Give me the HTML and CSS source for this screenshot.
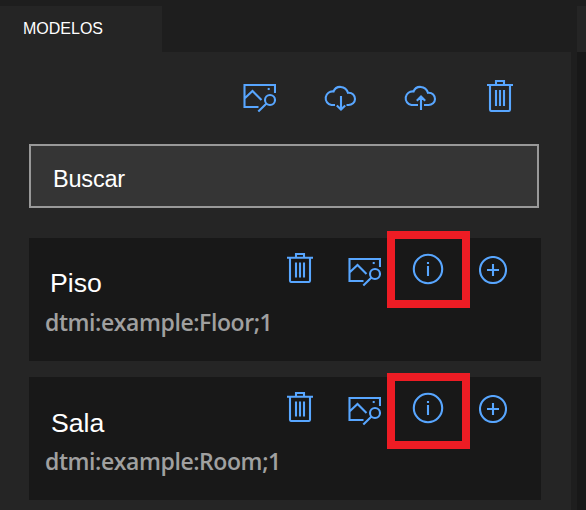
FILE: index.html
```html
<!DOCTYPE html>
<html lang="es">
<head>
<meta charset="utf-8">
<title>Modelos</title>
<link rel="stylesheet" href="styles.css">
</head>
<body>
<svg class="defs" width="0" height="0" aria-hidden="true">
  <symbol id="trash" viewBox="0 0 26 32" preserveAspectRatio="none">
    <path d="M0 5H26M9 5V1H17V5M3 5V29.500Q3 31 4.500 31H21.500Q23 31 23 29.500V5M9 10V26M13 10V26M17 10V26"/>
  </symbol>
  <symbol id="picture" viewBox="0 0 33 30">
    <path d="M15.500 23H1.500V1H32V9M1.500 14.500L9.500 7L18.500 16M23.500 19.500L15.300 27.500"/>
    <circle cx="27" cy="16" r="5"/>
    <path d="M24.700 5H26.700"/>
  </symbol>
  <symbol id="cloud-down" viewBox="0 0 34 26">
    <path d="M12 20H8.500A6.800 6.800 0 1 1 10.500 6.500C13 .2 22.500 .2 25 7.800C29.500 7.500 32 10.500 32 14C32 17.500 29 20 25.500 20H23.500M18 11V25M13.800 20.500L18 24.500L22.200 20.500"/>
  </symbol>
  <symbol id="cloud-up" viewBox="0 0 34 26">
    <path d="M15 20H8.500A6.800 6.800 0 1 1 10.500 6.500C13 .2 22.500 .2 25 7.800C29.500 7.500 32 10.500 32 14C32 17.500 29 20 25.500 20H21M18 25V11.500M13.800 15.700L18 11.500L22.200 15.700"/>
  </symbol>
  <symbol id="info" viewBox="0 0 32 32">
    <circle cx="16" cy="16" r="14.200"/><path d="M16 9V11M16 13V23"/>
  </symbol>
  <symbol id="plus" viewBox="0 0 28 28">
    <circle cx="14" cy="14" r="13"/><path d="M8 14H20M14 8V20"/>
  </symbol>
</svg>
<div class="app">
  <section class="models">
    <header class="tabs"><div class="tab">MODELOS</div></header>
    <main class="panel">
      <nav class="toolbar">
        <svg class="icon picture"><use href="#picture"/></svg>
        <svg class="icon cloud"><use href="#cloud-down"/></svg>
        <svg class="icon cloud cloud-up"><use href="#cloud-up"/></svg>
        <svg class="icon trash"><use href="#trash"/></svg>
      </nav>
      <div class="search">Buscar</div>
      <article class="card">
        <div class="details">
          <div class="name">Piso</div>
          <div class="model-id">dtmi:example:Floor;1</div>
        </div>
        <div class="actions">
          <svg class="icon trash"><use href="#trash"/></svg>
          <svg class="icon picture"><use href="#picture"/></svg>
          <svg class="icon info"><use href="#info"/></svg>
          <svg class="icon plus"><use href="#plus"/></svg>
        </div>
        <div class="highlight"></div>
      </article>
      <article class="card">
        <div class="details">
          <div class="name second">Sala</div>
          <div class="model-id">dtmi:example:Room;1</div>
        </div>
        <div class="actions">
          <svg class="icon trash"><use href="#trash"/></svg>
          <svg class="icon picture"><use href="#picture"/></svg>
          <svg class="icon info"><use href="#info"/></svg>
          <svg class="icon plus"><use href="#plus"/></svg>
        </div>
        <div class="highlight lower"></div>
      </article>
    </main>
  </section>
  <aside class="neighbor"><div class="neighbor-tab"></div></aside>
</div>
</body>
</html>
```

FILE: styles.css
```css
* { box-sizing: border-box; }
body {
  margin: 0;
  background: #1e1e1e;
  color: #fff;
  font-family: "Liberation Sans", Arial, sans-serif;
}
.defs { position: absolute; }
.app {
  display: flex;
  gap: 6px;
  width: 586px;
  height: 510px;
  padding-top: 6px;
  overflow: hidden;
}
.models { width: 571px; display: flex; flex-direction: column; }
.tabs { height: 46px; }
.tab {
  width: 162px;
  height: 46px;
  padding: 14px 0 0 23px;
  background: #252525;
  font-size: 16px;
  line-height: 18px;
}
.panel { flex: 1; padding: 28px 30px 0 29px; background: #252525; }
.neighbor { flex: 1; background: #181818; }
.neighbor-tab { height: 46px; background: #252525; }

.icon {
  display: block;
  flex: none;
  fill: none;
  stroke: #58a6ff;
  stroke-width: 2.1;
  overflow: visible;
}
.trash { width: 26px; height: 32px; }
.picture { width: 33px; height: 30px; }
.cloud { width: 34px; height: 26px; }
.info { width: 32px; height: 32px; }
.plus { width: 28px; height: 28px; }

.toolbar { display: flex; height: 64px; padding-left: 214px; }
.toolbar .picture { margin: 4px 47px 0 0; }
.toolbar .cloud { margin: 5px 46px 0 0; }
.toolbar .cloud-up { margin-right: 50px; }

.search {
  width: 510px;
  height: 64px;
  margin-bottom: 30px;
  padding: 19px 22px;
  border: 2px solid #999;
  background: #353535;
  font-size: 23.5px;
  line-height: 28px;
  letter-spacing: -0.2px;
}
.card {
  position: relative;
  display: flex;
  height: 123px;
  margin-bottom: 16px;
  background: #181818;
}
.details { width: 258px; padding: 29px 0 0 16px; }
.name { padding-left: 5px; font-size: 26.67px; line-height: 32px; }
.second { padding: 1px 0 0 6px; margin-bottom: -1px; }
.model-id {
  margin-top: 7px;
  color: #a0a0a0;
  font: 600 23px/32px "Open Sans", "Noto Sans", sans-serif;
  letter-spacing: -0.42px;
  white-space: nowrap;
}
.second + .model-id { margin-top: 7px; }
.actions { display: flex; padding-top: 15px; }
.actions .trash { height: 30px; margin-right: 35px; }
.actions .picture { margin: 5px 31px 0 0; }
.actions .info { margin-right: 35px; }
.actions .plus { margin-top: 3px; }
.highlight {
  position: absolute;
  left: 358px;
  top: -7px;
  width: 83px;
  height: 77px;
  border: 8px solid #ed1c24;
}
.lower { top: -4px; height: 76px; }
```
